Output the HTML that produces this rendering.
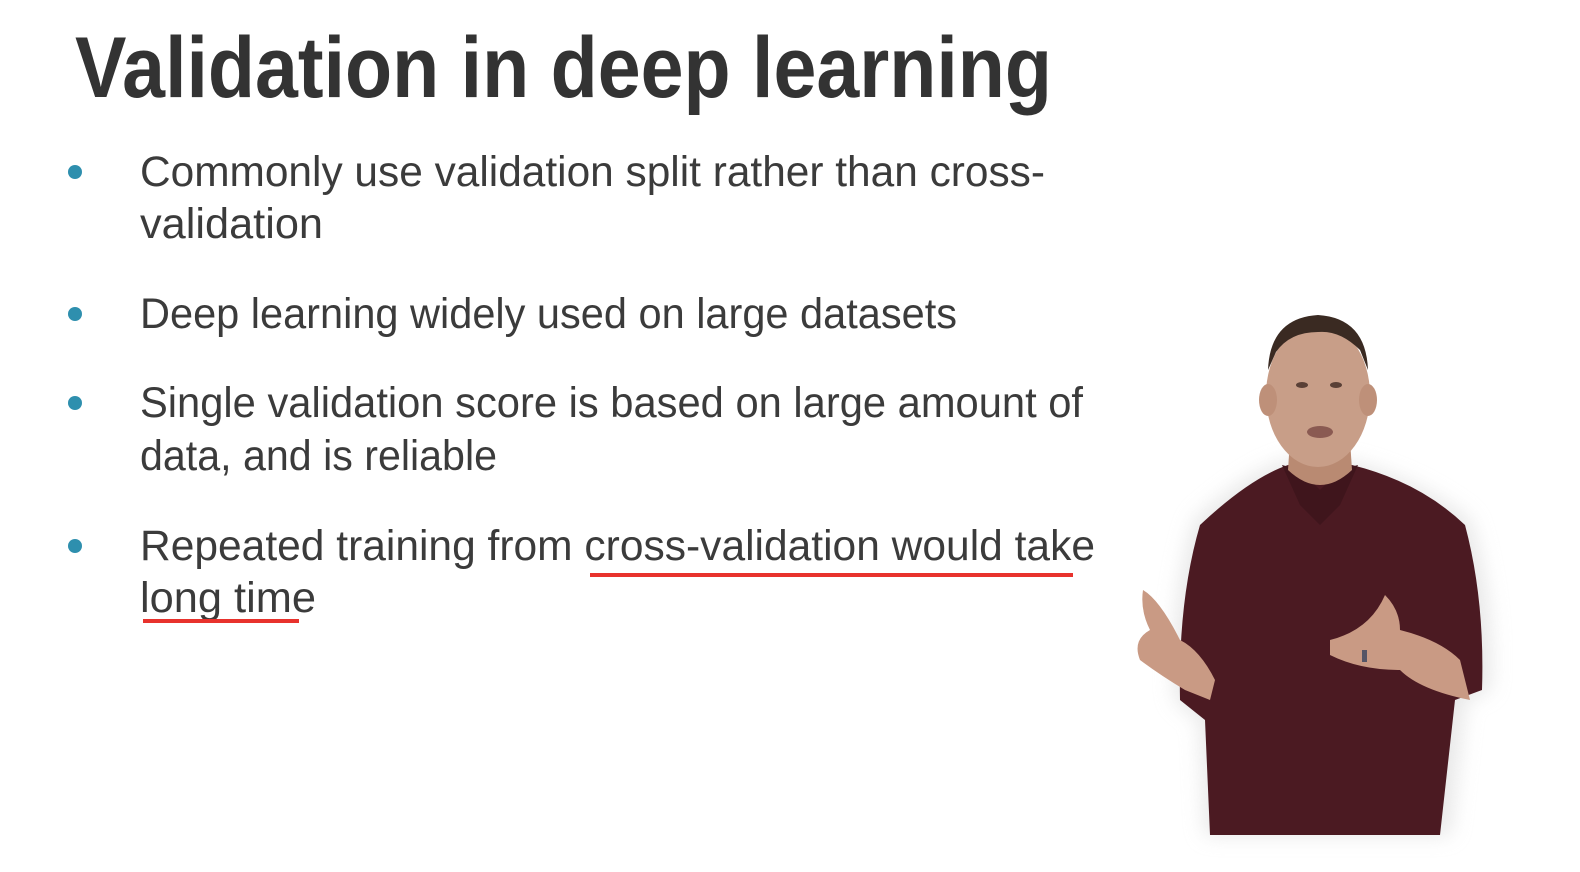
<!DOCTYPE html>
<html><head><meta charset="utf-8"><style>
html,body{margin:0;padding:0;background:#fff;width:1580px;height:872px;overflow:hidden}
svg{display:block}
text{font-family:"Liberation Sans",sans-serif}
</style></head><body>
<svg width="1580" height="872" viewBox="0 0 1580 872" xmlns="http://www.w3.org/2000/svg">
<defs>
<filter id="bl" x="-20%" y="-20%" width="140%" height="140%"><feGaussianBlur stdDeviation="10"/></filter>
<filter id="sb"><feGaussianBlur stdDeviation="2"/></filter>
</defs>
<rect width="1580" height="872" fill="#fff"/>
<text x="75" y="97" font-size="86" font-weight="bold" fill="#333" textLength="977" lengthAdjust="spacingAndGlyphs">Validation in deep learning</text>
<g fill="#2e8fae">
<circle cx="75" cy="172" r="7"/><circle cx="75" cy="314" r="7"/><circle cx="75" cy="403" r="7"/><circle cx="75" cy="546" r="7"/>
</g>
<g font-size="43" fill="#3b3b3b">
<text x="140" y="186" textLength="905" lengthAdjust="spacingAndGlyphs">Commonly use validation split rather than cross-</text>
<text x="140" y="238" textLength="183" lengthAdjust="spacingAndGlyphs">validation</text>
<text x="140" y="328" textLength="817" lengthAdjust="spacingAndGlyphs">Deep learning widely used on large datasets</text>
<text x="140" y="417" textLength="943" lengthAdjust="spacingAndGlyphs">Single validation score is based on large amount of</text>
<text x="140" y="470" textLength="357" lengthAdjust="spacingAndGlyphs">data, and is reliable</text>
<text x="140" y="560" textLength="955" lengthAdjust="spacingAndGlyphs">Repeated training from cross-validation would take</text>
<text x="140" y="612" textLength="176" lengthAdjust="spacingAndGlyphs">long time</text>
</g>
<rect x="590" y="573" width="483" height="4" fill="#e8322d"/>
<rect x="143" y="619" width="156" height="4" fill="#e8322d"/>
<!-- person -->
<g>
<path d="M1195 520 Q1250 470 1290 460 L1350 462 Q1420 480 1470 520 Q1495 600 1490 690 L1465 700 L1450 835 L1205 835 L1200 720 L1175 700 Q1170 600 1195 520Z" fill="#d8d8d8" filter="url(#bl)" opacity="0.6"/>
<path d="M1200 525 Q1250 478 1288 465 L1352 465 Q1420 482 1465 525 Q1485 600 1482 690 L1455 700 L1440 835 L1210 835 L1205 720 L1180 700 Q1178 600 1200 525Z" fill="#4b1a22"/>
<path d="M1282 465 L1300 505 L1320 525 L1340 505 L1358 465 L1340 470 L1320 490 L1300 470Z" fill="#3f151c"/>
<path d="M1290 440 L1350 440 L1352 470 Q1320 500 1288 470Z" fill="#b98a72"/>
<ellipse cx="1318" cy="395" rx="52" ry="72" fill="#c89e88"/>
<path d="M1268 370 Q1270 318 1318 315 Q1366 318 1368 370 L1360 350 Q1340 330 1318 332 Q1290 332 1276 352Z" fill="#3a2a22"/>
<ellipse cx="1268" cy="400" rx="9" ry="16" fill="#be9079"/>
<ellipse cx="1368" cy="400" rx="9" ry="16" fill="#be9079"/>
<ellipse cx="1302" cy="385" rx="6" ry="3" fill="#5a4036"/>
<ellipse cx="1336" cy="385" rx="6" ry="3" fill="#5a4036"/>
<ellipse cx="1320" cy="432" rx="13" ry="6" fill="#8a5a52"/>
<!-- left arm/hand -->
<path d="M1185 690 L1210 700 L1215 680 Q1200 650 1180 640 Q1160 600 1143 590 Q1140 610 1150 630 Q1132 640 1140 660 Q1160 675 1185 690Z" fill="#c99a84"/>
<!-- right hand -->
<path d="M1330 640 Q1370 630 1385 595 Q1400 610 1400 630 Q1440 640 1460 660 L1470 700 Q1420 690 1400 670 Q1360 670 1330 655Z" fill="#c99a84"/>
<rect x="1362" y="650" width="5" height="12" fill="#556"/>
</g>
</svg>
</body></html>
